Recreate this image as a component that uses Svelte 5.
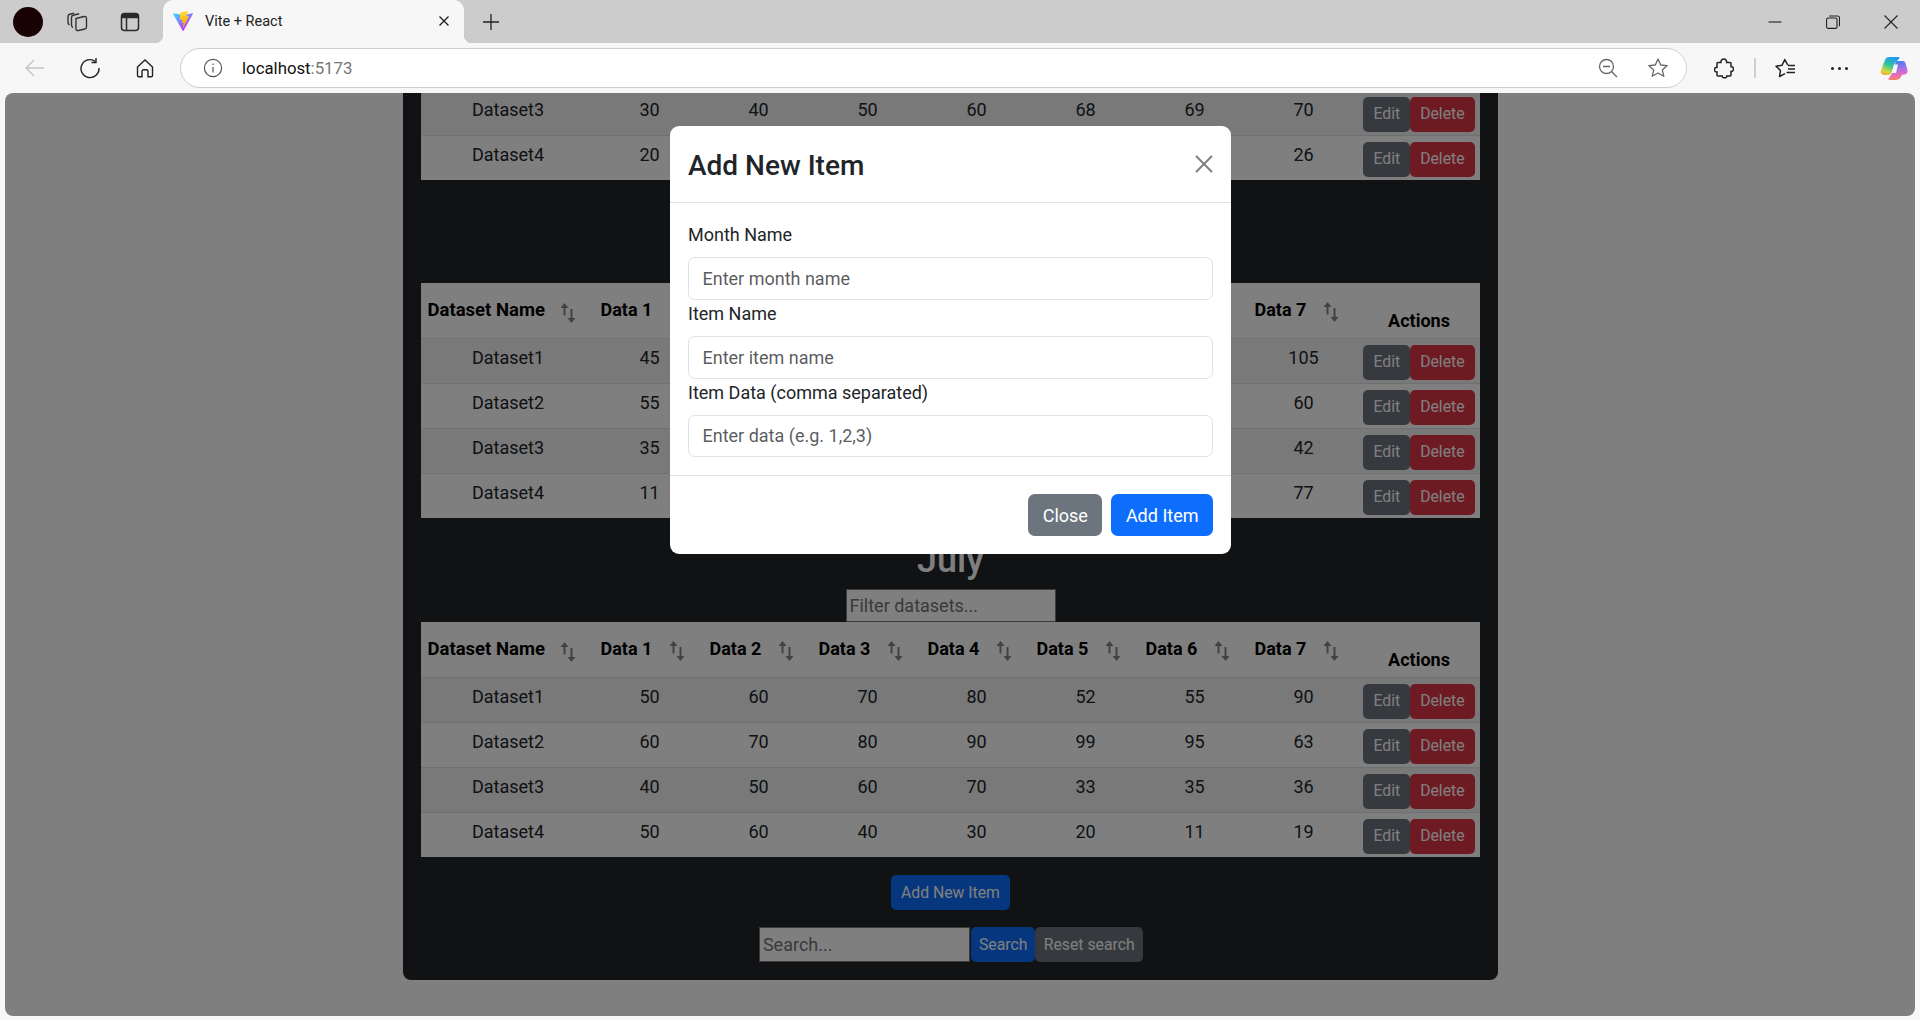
<script lang="ts">
	const head = ['Data 1', 'Data 2', 'Data 3', 'Data 4', 'Data 5', 'Data 6', 'Data 7'];

	const sections = [
		{
			title: '',
			showHead: false,
			rows: [
				['Dataset3', 30, 40, 50, 60, 68, 69, 70],
				['Dataset4', 20, 30, 40, 50, 28, 27, 26]
			]
		},
		{
			title: 'June',
			showHead: true,
			rows: [
				['Dataset1', 45, 55, 65, 75, 85, 95, 105],
				['Dataset2', 55, 65, 75, 85, 80, 70, 60],
				['Dataset3', 35, 45, 55, 65, 50, 48, 42],
				['Dataset4', 11, 25, 35, 45, 55, 65, 77]
			]
		},
		{
			title: 'July',
			showHead: true,
			rows: [
				['Dataset1', 50, 60, 70, 80, 52, 55, 90],
				['Dataset2', 60, 70, 80, 90, 99, 95, 63],
				['Dataset3', 40, 50, 60, 70, 33, 35, 36],
				['Dataset4', 50, 60, 40, 30, 20, 11, 19]
			]
		}
	];
</script>

{#snippet sortIcon()}
	<svg class="sort" width="16" height="20" viewBox="0 0 16 20" fill="none" stroke="currentColor" stroke-width="2">
		<path d="M4.500 3v9.500" />
		<path d="M4.500 0L8.500 5h-8z" fill="currentColor" stroke="none" />
		<path d="M11.500 6v10.500" />
		<path d="M11.500 20L15.500 15h-8z" fill="currentColor" stroke="none" />
	</svg>
{/snippet}

<div class="window">
	<div class="tabbar">
		<div class="avatar"></div>
		<div class="tb-btn">
			<svg width="22" height="20" viewBox="0 0 22 20" fill="none" stroke="#333" stroke-width="1.400">
				<path d="M10 6.500l8-2c1.500-.3 2.500.5 2.500 2V15c0 1-.6 1.800-1.600 2l-6.500 1.500c-1.500.3-2.500-.5-2.500-2z" />
				<path d="M7 15.500c-1-.5-1.500-1.300-1.500-2.500V5.500c0-1.200.6-2 1.700-2.300l6-1.500" />
				<path d="M3.500 13c-1-.6-1.500-1.300-1.500-2.500V4.500c0-1.200.6-2 1.700-2.300l4.500-1" />
			</svg>
		</div>
		<div class="tb-btn">
			<svg width="20" height="20" viewBox="0 0 20 20" fill="none" stroke="#2a2a2a" stroke-width="1.500">
				<rect x="1.500" y="1.500" width="17" height="17" rx="3" />
				<path d="M2 5.500h16V3.500l-1.500-1.500h-13L2 3.500z" fill="#2a2a2a" />
				<path d="M6.500 5.500V18" />
			</svg>
		</div>
		<div class="tab">
			<svg width="20" height="20" viewBox="0 0 256 257">
				<defs>
					<linearGradient id="vitea" x1="0" y1="0.1" x2="0.6" y2="0.9">
						<stop offset="0" stop-color="#41d1ff" />
						<stop offset="1" stop-color="#bd34fe" />
					</linearGradient>
					<linearGradient id="viteb" x1="0.4" y1="0" x2="0.5" y2="0.8">
						<stop offset="0" stop-color="#ffea83" />
						<stop offset="0.1" stop-color="#ffdd35" />
						<stop offset="1" stop-color="#ffa800" />
					</linearGradient>
				</defs>
				<path fill="url(#vitea)" d="M255.153 37.938 134.897 252.976c-2.483 4.44-8.862 4.466-11.382.048L.875 37.958c-2.746-4.814 1.371-10.646 6.827-9.67l120.385 21.517a6.537 6.537 0 0 0 2.322-.004l117.867-21.483c5.438-.991 9.574 4.796 6.877 9.62Z" />
				<path fill="url(#viteb)" d="M185.432.063 96.44 17.501a3.268 3.268 0 0 0-2.634 3.014l-5.474 92.456a3.268 3.268 0 0 0 3.997 3.378l24.777-5.718c2.318-.535 4.413 1.507 3.936 3.838l-7.361 36.047c-.495 2.426 1.782 4.5 4.151 3.78l15.304-4.649c2.372-.72 4.652 1.36 4.15 3.788l-11.698 56.621c-.732 3.542 3.979 5.473 5.943 2.437l1.313-2.028 72.516-144.72c1.215-2.423-.88-5.186-3.54-4.672l-25.505 4.922c-2.396.462-4.435-1.77-3.759-4.114l16.646-57.705c.677-2.35-1.37-4.583-3.769-4.113Z" />
			</svg>
			<span class="tab-title">Vite + React</span>
			<svg class="tab-close" width="12" height="12" viewBox="0 0 12 12" stroke="#222" stroke-width="1.400">
				<path d="M1.500 1.500l9 9M10.500 1.500l-9 9" />
			</svg>
		</div>
		<div class="new-tab">
			<svg width="18" height="18" viewBox="0 0 18 18" stroke="#222" stroke-width="1.300">
				<path d="M9 1v16M1 9h16" />
			</svg>
		</div>
		<div class="win-controls">
			<div class="win-btn">
				<svg width="14" height="14" viewBox="0 0 14 14" stroke="#222" stroke-width="1.100"><path d="M0.500 7h13" /></svg>
			</div>
			<div class="win-btn">
				<svg width="14" height="14" viewBox="0 0 14 14" fill="none" stroke="#222" stroke-width="1.100">
					<rect x="0.600" y="3" width="10.400" height="10.400" rx="1.500" />
					<path d="M3.200 1h8.300c1 0 2 1 2 2v8.200" />
				</svg>
			</div>
			<div class="win-btn">
				<svg width="14" height="14" viewBox="0 0 14 14" stroke="#222" stroke-width="1.100"><path d="M.5.500l13 13M13.500.500l-13 13" /></svg>
			</div>
		</div>
	</div>

	<div class="toolbar">
		<div class="nav-btn">
			<svg width="20" height="20" viewBox="0 0 20 20" fill="none" stroke="#c4c4c4" stroke-width="1.300"><path d="M19 10H1M9 2l-8 8 8 8" /></svg>
		</div>
		<div class="nav-btn">
			<svg width="22" height="22" viewBox="0 0 22 22" fill="none" stroke="#222" stroke-width="1.400">
				<path d="M16.500 4.500A9 9 0 1 0 20 11" />
				<path d="M17 1v4.500h-4.500" />
			</svg>
		</div>
		<div class="nav-btn">
			<svg width="20" height="20" viewBox="0 0 20 20" fill="none" stroke="#222" stroke-width="1.400">
				<path d="M2.500 9L10 2l7.500 7v8.500c0 .8-.5 1.200-1.200 1.200h-3.300v-5.500c0-.8-.6-1.400-1.400-1.400H8.400c-.8 0-1.400.6-1.400 1.400v5.500H3.700c-.7 0-1.200-.4-1.200-1.200z" />
			</svg>
		</div>
		<div class="address">
			<svg class="info" width="20" height="20" viewBox="0 0 20 20" fill="none" stroke="#555" stroke-width="1.200">
				<circle cx="10" cy="10" r="8.600" />
				<path d="M10 9v5.500" />
				<path d="M10 5.600v1.500" />
			</svg>
			<span class="url">localhost<span class="port">:5173</span></span>
			<svg class="zoom-icon" width="20" height="20" viewBox="0 0 20 20" fill="none" stroke="#666" stroke-width="1.300">
				<circle cx="8.500" cy="8.500" r="7" />
				<path d="M5 8.500h7M13.500 13.500l5.500 5.500" />
			</svg>
			<svg class="star" width="22" height="22" viewBox="0 0 22 22" fill="none" stroke="#666" stroke-width="1.300">
				<path d="M11 2l2.700 6 6.500.6-4.900 4.300 1.500 6.400L11 16l-5.800 3.300 1.500-6.400L1.800 8.600 8.300 8z" stroke-linejoin="round" />
			</svg>
		</div>
		<div class="tools">
			<div class="tool ext">
				<svg width="20" height="21" viewBox="0 0 20 21" fill="none" stroke="#222" stroke-width="1.500">
					<path d="M7 4.500c-.3-2 1-3.500 2.800-3.500s3.100 1.500 2.800 3.500H16c.6 0 1 .4 1 1v3.200c1.600-.3 2.500 1 2.500 2.300s-.9 2.700-2.500 2.400V17c0 .6-.4 1-1 1h-3.200c.2 1.300-1 1.800-2.300 1.800s-2.500-.5-2.300-1.800H4c-.6 0-1-.4-1-1v-3c-1.500.3-2.500-.8-2.500-2.300 0-1.500 1-2.600 2.500-2.300V5.500c0-.6.4-1 1-1z" />
				</svg>
			</div>
			<div class="sep"></div>
			<div class="tool fav">
				<svg width="22" height="20" viewBox="0 0 22 20" fill="none" stroke="#222" stroke-width="1.500">
					<path d="M12.800 7.200 9.800 1.500 7 7.300 1 8.200l4.500 4.300-1 6 5.500-2.800" stroke-linejoin="round" />
					<path d="M13 7.500h7M13 11h7M11.500 14.500h8.500" />
				</svg>
			</div>
			<div class="tool dots">
				<i></i><i></i><i></i>
			</div>
			<div class="tool copilot">
				<svg width="28" height="25" viewBox="0 0 28 25">
					<defs>
						<linearGradient id="cpa" x1="0.6" y1="0" x2="0.2" y2="1">
							<stop offset="0" stop-color="#1e9cf0" />
							<stop offset="0.45" stop-color="#35c59a" />
							<stop offset="0.8" stop-color="#d6d83c" />
							<stop offset="1" stop-color="#f5a83a" />
						</linearGradient>
						<linearGradient id="cpb" x1="0.5" y1="0" x2="0.6" y2="1">
							<stop offset="0" stop-color="#3e7ff0" />
							<stop offset="0.4" stop-color="#a66ee8" />
							<stop offset="0.75" stop-color="#ee6fb8" />
							<stop offset="1" stop-color="#f58a4a" />
						</linearGradient>
					</defs>
					<path fill="url(#cpb)" d="M16.500 5H23c1.200 0 2 .8 2.400 2l2 7c.7 2.500-.7 4.500-3 4.500L22 19c-1 2.500-3 5-6 5H9.500c-1 0-1.300-.7-.8-1.400l3-4.600L15.500 7c.2-1 .5-2 1-2z" />
					<path fill="url(#cpa)" d="M9 1h9.500c1 0 1.200.6.8 1.400L15 7l-3.500 10c-.8 1.500-2 2-3.500 2H4.500C1.500 19 .3 16.500 1 14L5 4c.7-2 2-3 4-3z" />
					<path fill="#f7f7f7" d="M14 8.500h4l-2 8.500h-4.500z" />
				</svg>
			</div>
		</div>
	</div>

	<div class="viewport">
		<div class="page">
			<div class="card">
				{#each sections as section}
					{#if section.title}
						<h2 class:tight={section.title === 'June'}>{section.title}</h2>
						<input class="plain filter" placeholder="Filter datasets..." />
					{/if}
					<table>
						<colgroup>
							<col class="col-name" />
							{#each head as _}<col class="col-data" />{/each}
							<col />
						</colgroup>
						{#if section.showHead}
							<thead>
								<tr>
									<th class="sortable">
										<span class="th-inner name">Dataset Name{@render sortIcon()}</span>
									</th>
									{#each head as label}
										<th class="sortable">
											<span class="th-inner">{label}{@render sortIcon()}</span>
										</th>
									{/each}
									<th class="actions-head">Actions</th>
								</tr>
							</thead>
						{/if}
						<tbody>
							{#each section.rows as row}
								<tr>
									{#each row as cell}<td>{cell}</td>{/each}
									<td class="actions"><button class="btn sm edit">Edit</button><button class="btn sm del">Delete</button></td>
								</tr>
							{/each}
						</tbody>
					</table>
				{/each}

				<div class="bottom">
					<button class="btn sm primary">Add New Item</button>
					<form class="search">
						<input class="plain search-input" placeholder="Search..." />
						<button type="button" class="btn sm primary search-btn">Search</button>
						<button type="button" class="btn sm edit reset-btn">Reset search</button>
					</form>
				</div>
			</div>
		</div>

		<div class="backdrop">
			<div class="modal">
				<div class="modal-header">
					<div class="modal-title">Add New Item</div>
					<svg width="18" height="18" viewBox="0 0 18 18" stroke="#808080" stroke-width="2"><path d="M1 1l16 16M17 1L1 17" /></svg>
				</div>
				<div class="modal-body">
					<label for="month">Month Name</label>
					<input id="month" class="control" placeholder="Enter month name" />
					<label for="item">Item Name</label>
					<input id="item" class="control" placeholder="Enter item name" />
					<label for="data">Item Data (comma separated)</label>
					<input id="data" class="control" placeholder="Enter data (e.g. 1,2,3)" />
				</div>
				<div class="modal-footer">
					<button class="btn lg secondary">Close</button>
					<button class="btn lg primary">Add Item</button>
				</div>
			</div>
		</div>
	</div>
</div>

<style>
	:global(body) {
		margin: 0;
		background: #f7f7f7;
	}

	.window {
		display: flex;
		flex-direction: column;
		height: 1020px;
		overflow: hidden;
		font-family: Roboto, 'Noto Sans', sans-serif;
		color: #212529;
	}

	.tabbar {
		display: flex;
		align-items: center;
		flex: 0 0 43px;
		background: #ccc;
		padding-left: 13px;
	}

	.avatar {
		width: 30px;
		height: 30px;
		border-radius: 50%;
		background: #190203;
		margin-right: 14px;
	}

	.tb-btn {
		display: flex;
		align-items: center;
		justify-content: center;
		width: 40px;
		margin-right: 13px;
	}

	.tab {
		position: relative;
		display: flex;
		align-items: center;
		align-self: stretch;
		width: 301px;
		box-sizing: border-box;
		padding: 0 14px 1px 10px;
		background: #f7f7f7;
		border-radius: 10px 10px 0 0;
	}

	.tab::before,
	.tab::after {
		content: '';
		position: absolute;
		bottom: 0;
		width: 8px;
		height: 8px;
	}

	.tab::before {
		left: -8px;
		background: radial-gradient(circle at 0 0, transparent 8px, #f7f7f7 8.500px);
	}

	.tab::after {
		right: -8px;
		background: radial-gradient(circle at 100% 0, transparent 8px, #f7f7f7 8.500px);
	}

	.tab-title {
		margin-left: 12px;
		font-size: 14.500px;
		color: #222;
	}

	.tab-close {
		margin-left: auto;
	}

	.new-tab {
		display: flex;
		margin-left: 18px;
	}

	.win-controls {
		display: flex;
		margin-left: auto;
	}

	.win-btn {
		display: flex;
		align-items: center;
		justify-content: center;
		width: 58px;
		height: 43px;
	}

	.toolbar {
		display: flex;
		align-items: center;
		flex: 0 0 50px;
		background: #f7f7f7;
		padding-left: 15px;
		box-sizing: border-box;
	}

	.nav-btn {
		display: flex;
		align-items: center;
		justify-content: center;
		width: 40px;
		margin-right: 15px;
	}

	.address {
		display: flex;
		align-items: center;
		width: 1507px;
		height: 40px;
		box-sizing: border-box;
		background: #fff;
		border: 1px solid #cfcfcf;
		border-radius: 20px;
		padding: 0 17px 0 22px;
	}

	.url {
		margin-left: 19px;
		font-size: 16.800px;
		color: #111;
	}

	.port {
		color: #767676;
	}

	.zoom-icon {
		margin-left: auto;
	}

	.star {
		margin-left: 29px;
	}

	.tools {
		display: flex;
		align-items: center;
		flex: 1;
	}

	.tool {
		display: flex;
		align-items: center;
		justify-content: center;
	}

	.ext {
		margin-left: 27px;
		width: 20px;
	}

	.sep {
		width: 2px;
		height: 20px;
		background: #d0d0d0;
		margin-left: 20px;
	}

	.fav {
		margin-left: 19px;
		width: 22px;
	}

	.dots {
		gap: 4px;
		margin-left: 34px;
	}

	.dots i {
		width: 3px;
		height: 3px;
		border-radius: 50%;
		background: #222;
	}

	.copilot {
		margin-left: 32px;
	}

	.viewport {
		position: relative;
		flex: 1;
		display: flex;
		flex-direction: column;
		justify-content: flex-end;
		margin: 0 5px 4px;
		overflow: hidden;
		border-radius: 8px;
		background: #fff;
		font-size: 18px;
		line-height: 27px;
	}

	.page {
		padding: 0 19px 36px 0;
	}

	.card {
		width: 1095px;
		box-sizing: border-box;
		margin: 0 auto;
		padding: 0 18px 18px;
		background: #212529;
		border-radius: 0 0 8px 8px;
	}

	h2 {
		margin: 20px 0 7px;
		font-size: 36px;
		line-height: 44px;
		font-weight: 500;
		color: #fff;
		text-align: center;
	}

	h2.tight {
		margin-top: 19px;
	}

	.plain {
		display: block;
		box-sizing: border-box;
		font: inherit;
		font-size: 18px;
		padding: 1px 3px;
		background: #fff;
		border: 1px solid #767676;
		border-radius: 0;
		color: #212529;
	}

	.plain::placeholder {
		color: #757575;
	}

	.filter {
		width: 210px;
		height: 33px;
		margin: 0 auto;
	}

	table {
		width: 100%;
		table-layout: fixed;
		border-collapse: collapse;
		background: #fff;
		color: #212529;
		text-align: center;
	}

	.col-name {
		width: 174px;
	}

	.col-data {
		width: 109px;
	}

	th {
		padding: 4.500px;
		border-bottom: 1px solid #dee2e6;
		color: #000;
		font-weight: 700;
		vertical-align: bottom;
		height: 46px;
	}

	.sortable {
		text-align: left;
		vertical-align: middle;
		white-space: nowrap;
		padding-bottom: 6.500px;
		height: 44px;
	}

	.th-inner {
		display: inline-flex;
		align-items: center;
		padding-left: 1px;
		color: #000;
	}

	.th-inner.name {
		padding-left: 2px;
		font-size: 18.500px;
	}

	.th-inner.name .sort {
		margin-left: 15px;
	}

	.sort {
		margin-left: 17px;
		margin-top: 5px;
		color: #848484;
	}

	td {
		padding: 4.500px;
		border-bottom: 1px solid #dee2e6;
		vertical-align: top;
	}

	tbody tr:last-child td {
		border-bottom: 0;
	}

	tbody tr:nth-child(odd) td {
		background: rgba(0, 0, 0, 0.05);
	}

	.actions {
		white-space: nowrap;
		line-height: 0;
		padding: 5.500px 4.500px 3.500px;
	}

	.btn {
		display: inline-block;
		box-sizing: border-box;
		border: 1px solid transparent;
		font-family: inherit;
		color: #fff;
		cursor: pointer;
	}

	.btn.sm {
		padding: 4.500px 9px;
		font-size: 15.750px;
		line-height: 24px;
		border-radius: 5px;
	}

	.btn.sm.search-btn {
		margin-left: 1px;
		padding: 4.500px 7px;
	}

	.btn.sm.reset-btn {
		padding: 4.500px 7.500px;
	}

	.btn.lg {
		padding: 6.750px 13.500px;
		font-size: 18px;
		line-height: 27px;
		border-radius: 6.750px;
	}

	.edit,
	.secondary {
		background: #6c757d;
	}

	.del {
		background: #dc3545;
	}

	.primary {
		background: #0d6efd;
	}

	.bottom {
		display: flex;
		flex-direction: column;
		align-items: center;
		gap: 17px;
		margin-top: 18px;
	}

	.search {
		display: flex;
		align-items: stretch;
		margin-left: 1px;
	}

	.search-input {
		width: 211px;
		height: 35px;
	}

	.backdrop {
		position: absolute;
		inset: 0;
		display: flex;
		justify-content: center;
		align-items: flex-start;
		padding: 33px 19px 0 0;
		background: rgba(0, 0, 0, 0.5);
	}

	.modal {
		width: 561px;
		background: #fff;
		border-radius: 9px;
		color: #212529;
	}

	.modal-header {
		display: flex;
		align-items: center;
		justify-content: space-between;
		padding: 20px 18px 16px;
		border-bottom: 1px solid #dee2e6;
	}

	.modal-header svg {
		margin-top: -4px;
	}

	.modal-title {
		font-size: 28px;
		line-height: 40px;
		font-weight: 500;
	}

	.modal-body {
		padding: 18px 18px 17.500px;
	}

	label {
		display: block;
		margin-bottom: 9px;
	}

	.control {
		display: block;
		width: 100%;
		box-sizing: border-box;
		height: 42.750px;
		padding: 6.750px 13.500px;
		font: inherit;
		font-size: 18px;
		color: #212529;
		background: #fff;
		border: 1px solid #dee2e6;
		border-radius: 6.750px;
	}

	.control::placeholder {
		color: rgba(33, 37, 41, 0.75);
	}

	.modal-footer {
		display: flex;
		justify-content: flex-end;
		gap: 9px;
		padding: 18px;
		border-top: 1px solid #dee2e6;
	}
</style>
